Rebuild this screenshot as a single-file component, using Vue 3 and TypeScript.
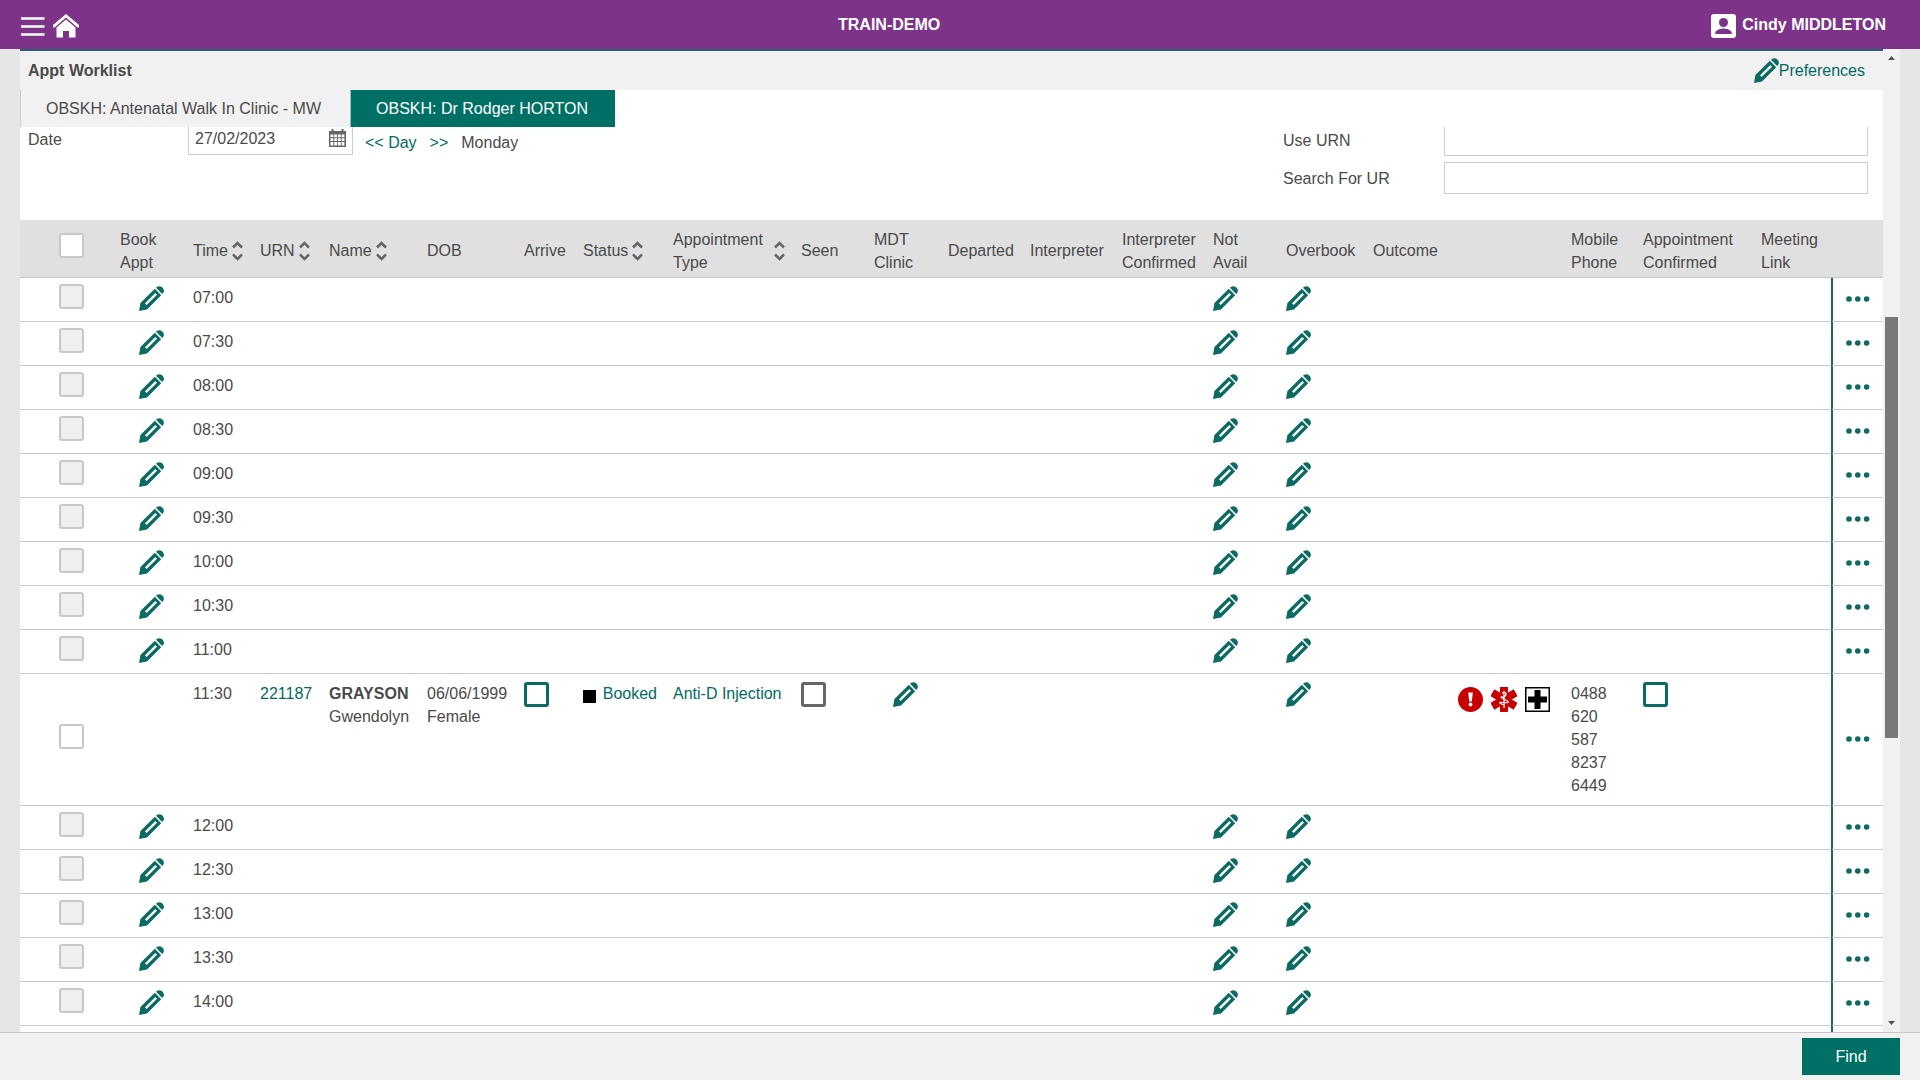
<script setup lang="ts">
import { ref } from 'vue'

interface Column {
  label: string
  width: number | null
  sortable?: boolean
}

const columns: Column[] = [
  { label: 'Book Appt', width: 73 },
  { label: 'Time', width: 67, sortable: true },
  { label: 'URN', width: 69, sortable: true },
  { label: 'Name', width: 98, sortable: true },
  { label: 'DOB', width: 97 },
  { label: 'Arrive', width: 59 },
  { label: 'Status', width: 90, sortable: true },
  { label: 'Appointment Type', width: 128, sortable: true },
  { label: 'Seen', width: 73 },
  { label: 'MDT Clinic', width: 74 },
  { label: 'Departed', width: 82 },
  { label: 'Interpreter', width: 92 },
  { label: 'Interpreter Confirmed', width: 91 },
  { label: 'Not Avail', width: 73 },
  { label: 'Overbook', width: 87 },
  { label: 'Outcome', width: null },
  { label: 'Mobile Phone', width: 72 },
  { label: 'Appointment Confirmed', width: 118 },
  { label: 'Meeting Link', width: 78 },
]

interface Patient {
  urn: string
  surname: string
  given: string
  dob: string
  sex: string
  status: string
  type: string
  phone: string
}

interface Slot {
  time: string
  patient?: Patient
}

const booked: Patient = {
  urn: '221187',
  surname: 'GRAYSON',
  given: 'Gwendolyn',
  dob: '06/06/1999',
  sex: 'Female',
  status: 'Booked',
  type: 'Anti-D Injection',
  phone: '0488 620 587 8237 6449',
}

const slots: Slot[] = [
  '07:00', '07:30', '08:00', '08:30', '09:00', '09:30', '10:00', '10:30',
  '11:00', '11:30', '12:00', '12:30', '13:00', '13:30', '14:00',
].map((time) => (time === '11:30' ? { time, patient: booked } : { time }))

const date = ref('27/02/2023')
const useUrn = ref('')
const searchUr = ref('')
</script>

<template>
  <svg width="0" height="0" class="defs" aria-hidden="true">
    <symbol id="pencil" viewBox="0 0 25 25">
      <path fill="currentColor" fill-rule="evenodd" d="M0 25 L1.400 17 L15.800 2.800 L22.200 9.200 L8 23.600 Z M6 17.300 L7.700 19 L18 8.700 L16.300 7 Z" />
      <path fill="currentColor" d="M17 1.800 L18 .9 Q20.600 -.9 23.400 1.600 Q26 4.400 24.100 7 L23.200 8 Z" />
    </symbol>
  </svg>
  <div class="page">
    <header class="topbar">
      <nav class="nav">
        <button type="button" class="plain" aria-label="Menu">
          <svg width="24" height="23" viewBox="0 0 24 23"><path d="M0 4.500h23.500M0 12.500h23.500M0 20.500h23.500" stroke="#fff" stroke-width="2.500" /></svg>
        </button>
        <a href="#" aria-label="Home" class="home">
          <svg width="26" height="24" viewBox="0 0 26 24" fill="#fff"><path d="M13 0 L26 11 V13.500 L24.500 13.500 L13 3.600 L1.500 13.500 L0 13.500 V11 Z" /><path d="M13 5.500 L22.500 13.500 V23.500 H16 V17 H10 V23.500 H3.500 V13.500 Z" /></svg>
        </a>
      </nav>
      <strong class="system">TRAIN-DEMO</strong>
      <div class="user">
        <svg width="25" height="24" viewBox="0 0 25 24"><rect width="25" height="24" rx="3" fill="#fff" /><circle cx="12.500" cy="8.500" r="4.500" fill="#7c3388" /><path d="M4 20 Q4 15 12.500 14.500 Q21 15 21 20 Z" fill="#7c3388" /></svg>
        <strong>Cindy MIDDLETON</strong>
      </div>
    </header>

    <div class="body">
      <main class="panel">
        <div class="titlebar">
          <h1>Appt Worklist</h1>
          <a href="#" class="prefs"><svg class="pencil"><use href="#pencil" /></svg>Preferences</a>
        </div>
        <div class="tabs" role="tablist">
          <button type="button" role="tab" class="tab" aria-selected="false">OBSKH: Antenatal Walk In Clinic - MW</button>
          <button type="button" role="tab" class="tab active" aria-selected="true">OBSKH: Dr Rodger HORTON</button>
        </div>
        <form class="filters" @submit.prevent>
          <div class="datefield">
            <label for="date">Date</label>
            <div class="datebox">
              <input id="date" v-model="date" type="text">
              <button type="button" class="plain" aria-label="Open calendar">
                <svg width="17" height="18" viewBox="0 0 17 18"><path d="M0 2h17v16H0z" fill="#666" /><path d="M3.500 0v4M13.500 0v4" stroke="#666" stroke-width="2" /><path d="M1.500 5.500h2.800v2.800H1.500zM5.200 5.500H8v2.800H5.200zM8.900 5.500h2.800v2.800H8.900zM12.600 5.500h2.800v2.800h-2.800zM1.500 9.200h2.800V12H1.500zM5.200 9.200H8V12H5.200zM8.900 9.200h2.800V12H8.900zM12.600 9.200h2.800V12h-2.800zM1.500 13h2.800v3.400H1.500zM5.200 13H8v3.400H5.200zM8.900 13h2.800v3.400H8.900zM12.600 13h2.800v3.400h-2.800z" fill="#fff" /></svg>
              </button>
            </div>
            <div class="daynav">
              <span><a href="#" aria-label="Previous day">&lt;&lt;</a> <a href="#">Day</a></span>
              <a href="#" aria-label="Next day">&gt;&gt;</a>
              <span>Monday</span>
            </div>
          </div>
          <div class="search">
            <div class="field first">
              <label for="useurn">Use URN</label>
              <input id="useurn" v-model="useUrn" type="text">
            </div>
            <div class="field">
              <label for="searchur">Search For UR</label>
              <input id="searchur" v-model="searchUr" type="text">
            </div>
          </div>
        </form>

        <div class="list">
          <table>
            <colgroup>
              <col style="width: 92px">
              <col v-for="c in columns" :key="c.label" :style="c.width ? { width: c.width + 'px' } : undefined">
              <col style="width: 52px">
            </colgroup>
            <thead>
              <tr>
                <th class="pick"><input type="checkbox" class="box" aria-label="Select all"></th>
                <th v-for="c in columns" :key="c.label" scope="col">
                  <span class="head">
                    <span>{{ c.label }}</span>
                    <svg v-if="c.sortable" width="11" height="20" viewBox="0 0 11 20" fill="none" stroke="#666" stroke-width="2.500"><path d="M1 6.500 L5.500 2 L10 6.500M1 13.500 L5.500 18 L10 13.500" /></svg>
                  </span>
                </th>
                <th></th>
              </tr>
            </thead>
            <tbody>
              <tr v-for="s in slots" :key="s.time">
                <td class="pick"><input type="checkbox" class="box" :disabled="!s.patient" :aria-label="'Select ' + s.time"></td>
                <td class="indent"><a v-if="!s.patient" href="#" aria-label="Book appointment"><svg class="pencil"><use href="#pencil" /></svg></a></td>
                <td>{{ s.time }}</td>
                <td><a v-if="s.patient" href="#">{{ s.patient.urn }}</a></td>
                <td><template v-if="s.patient"><strong>{{ s.patient.surname }}</strong><br>{{ s.patient.given }}</template></td>
                <td><template v-if="s.patient">{{ s.patient.dob }}<br>{{ s.patient.sex }}</template></td>
                <td><input v-if="s.patient" type="checkbox" class="box teal" aria-label="Arrive"></td>
                <td><span v-if="s.patient" class="status"><i class="swatch"></i><a href="#">{{ s.patient.status }}</a></span></td>
                <td class="nowrap"><a v-if="s.patient" href="#">{{ s.patient.type }}</a></td>
                <td><input v-if="s.patient" type="checkbox" class="box dark" aria-label="Seen"></td>
                <td class="indent"><a v-if="s.patient" href="#" aria-label="MDT clinic"><svg class="pencil"><use href="#pencil" /></svg></a></td>
                <td></td>
                <td></td>
                <td></td>
                <td><a v-if="!s.patient" href="#" aria-label="Not available"><svg class="pencil"><use href="#pencil" /></svg></a></td>
                <td><a href="#" aria-label="Overbook"><svg class="pencil"><use href="#pencil" /></svg></a></td>
                <td>
                  <div v-if="s.patient" class="alerts">
                    <svg width="25" height="25" viewBox="0 0 25 25"><circle cx="12.500" cy="12.500" r="12.500" fill="#c80000" /><path d="M10.200 5.500h4.600l-1 9h-2.600z" fill="#fff" /><circle cx="12.500" cy="17.500" r="1.900" fill="#fff" /></svg>
                    <svg width="26" height="25" viewBox="0 0 26 25"><g fill="#c80000"><rect x="9" y="0" width="8" height="25" /><rect x="9" y="-1" width="8" height="27" transform="rotate(60 13 12.500)" /><rect x="9" y="-1" width="8" height="27" transform="rotate(120 13 12.500)" /></g><path d="M13 4v17M11 6q5-1.500 4 1.500t-4 2.500 3.500 3-2 2.500 1.500 3" fill="none" stroke="#fff" stroke-width="1.200" /></svg>
                    <svg width="25" height="25" viewBox="0 0 25 25"><path d="M0 0h25v25H0z" /><path d="M1.500 1.500h22v22h-22z" fill="#fff" /><path d="M9.500 3h6v6.500H22v6h-6.500V22h-6v-6.500H3v-6h6.500z" /></svg>
                  </div>
                </td>
                <td>{{ s.patient?.phone }}</td>
                <td><input v-if="s.patient" type="checkbox" class="box teal" aria-label="Appointment confirmed"></td>
                <td></td>
                <td class="more">
                  <button type="button" class="plain" aria-label="More actions">
                    <svg width="24" height="6" viewBox="0 0 24 6" fill="#0b6b62"><circle cx="3" cy="3" r="2.800" /><circle cx="11.800" cy="3" r="2.800" /><circle cx="20.600" cy="3" r="2.800" /></svg>
                  </button>
                </td>
              </tr>
            </tbody>
          </table>
          <div class="rest"></div>
        </div>
      </main>
      <div class="scrollbar" aria-hidden="true">
        <svg width="17" height="17" viewBox="0 0 17 17"><path d="M5 11h7L8.500 7z" fill="#505050" /></svg>
        <i class="before"></i>
        <i class="thumb"></i>
        <i class="after"></i>
        <svg width="17" height="17" viewBox="0 0 17 17"><path d="M5 6h7l-3.500 4z" fill="#505050" /></svg>
      </div>
    </div>

    <footer class="actions"><button type="button" class="find">Find</button></footer>
  </div>
</template>

<style>
body {
  margin: 0;
}
</style>

<style scoped>
.page {
  display: flex;
  flex-direction: column;
  height: 100vh;
  background: #e6e6e6;
  color: #4a4a4a;
  font: 16px/23px "Liberation Sans", Arial, sans-serif;
}
.page *,
.page {
  box-sizing: border-box;
}
.defs {
  position: absolute;
}
svg {
  display: block;
  flex: none;
}
a {
  color: #006b60;
  text-decoration: none;
}
button,
input {
  margin: 0;
  color: inherit;
  font: inherit;
}
.plain {
  padding: 0;
  border: 0;
  background: none;
}
.pencil {
  width: 25px;
  height: 25px;
  color: #0b6b62;
}
.topbar {
  display: flex;
  flex: none;
  align-items: center;
  height: 49px;
  background: #7c3388;
  color: #fff;
}
.nav {
  display: flex;
  align-items: center;
  gap: 8px;
  padding-left: 21px;
  padding-top: 2px;
}
.system {
  flex: 1;
  text-align: center;
}
.user {
  display: flex;
  align-items: center;
  gap: 6px;
  padding: 0 34px 0 12px;
}
.user svg {
  margin-top: 2px;
}
.body {
  display: flex;
  flex: 1;
  min-height: 0;
  padding: 0 20px;
}
.panel {
  display: flex;
  flex: 1;
  flex-direction: column;
  min-width: 0;
  border-top: 2px solid #2a5f73;
  background: #fff;
}
.titlebar {
  display: flex;
  flex: none;
  align-items: center;
  justify-content: space-between;
  height: 39px;
  padding: 0 18px 0 8px;
  background: #f1f1f1;
}
h1 {
  margin: 0;
  font-size: 16px;
  line-height: 23px;
}
.prefs {
  display: flex;
  align-items: center;
}
.tabs {
  display: flex;
  flex: none;
  height: 37px;
}
.tab {
  padding: 0 29px 0 25px;
  border: 0;
  border-left: 1px solid #ccc;
  background: #f1f1f1;
}
.tab.active {
  padding-right: 27px;
  border-left-color: #8fc0ba;
  background: #007065;
  color: #fff;
}
.filters {
  display: flex;
  flex: none;
  justify-content: space-between;
  height: 93px;
}
.datefield {
  display: flex;
  align-items: flex-start;
  padding-left: 8px;
}
.datefield label {
  width: 160px;
  padding-top: 1px;
}
.datebox {
  display: flex;
  align-items: flex-start;
  width: 165px;
  height: 28px;
  padding: 0 6px;
  border: 1px solid #ccc;
  border-top: 0;
}
.datebox input {
  flex: 1;
  min-width: 0;
  height: 23px;
  padding: 0;
  border: 0;
  outline: 0;
}
.datebox button {
  padding-top: 2px;
}
.daynav {
  display: flex;
  gap: 13px;
  padding: 4px 0 0 12px;
}
.search {
  display: flex;
  flex-direction: column;
  gap: 6px;
  width: 600px;
  padding-right: 15px;
}
.field {
  display: flex;
  align-items: center;
}
.field label {
  width: 161px;
}
.field input {
  flex: 1;
  min-width: 0;
  height: 32px;
  padding: 0 8px;
  border: 1px solid #ccc;
  background: #fff;
}
.first {
  align-items: flex-start;
}
.first label {
  padding-top: 2px;
}
.first input {
  height: 29px;
  border-top: 0;
}
.list {
  display: flex;
  flex: 1;
  flex-direction: column;
  min-height: 0;
  overflow: hidden;
}
table {
  flex: none;
  width: 100%;
  border-collapse: separate;
  border-spacing: 0;
  table-layout: fixed;
}
th {
  height: 58px;
  padding: 4px 8px 0;
  border-bottom: 1px solid #c8c8c8;
  background: #e0e0e0;
  font-weight: 400;
  text-align: left;
  vertical-align: middle;
}
.head {
  display: flex;
  align-items: center;
  gap: 4px;
}
td {
  height: 44px;
  padding: 8px;
  border-bottom: 1px solid #c8c8c8;
  vertical-align: top;
}
.nowrap {
  white-space: nowrap;
}
td.indent {
  padding-left: 27px;
}
th.pick,
td.pick {
  padding: 0 0 7px 39px;
  vertical-align: middle;
}
td.more {
  padding: 0 0 2px 13px;
  border-left: 2px solid #1c6660;
  vertical-align: middle;
}
.more .plain {
  display: block;
}
.box {
  display: block;
  width: 25px;
  height: 25px;
  border: 2px solid #c8c8c8;
  border-radius: 3px;
  background: #fff;
  appearance: none;
}
.box:disabled {
  background: #efefef;
}
.box.teal {
  border: 3px solid #0b6b62;
}
.box.dark {
  border: 3px solid #666;
}
.status {
  display: flex;
  align-items: center;
  gap: 7px;
}
.swatch {
  width: 13px;
  height: 13px;
  margin-top: 6px;
  background: #000;
}
.alerts {
  display: flex;
  justify-content: flex-end;
  gap: 8px;
  padding: 5px 5px 0 0;
}
.rest {
  flex: 1;
  margin-right: 50px;
  border-right: 2px solid #1c6660;
}
.scrollbar {
  display: flex;
  flex-direction: column;
  width: 17px;
  background: #f1f1f1;
}
.before {
  flex: 251;
}
.thumb {
  flex: 421;
  margin: 0 2px;
  background: #787878;
}
.after {
  flex: 277;
}
.actions {
  display: flex;
  flex: none;
  justify-content: flex-end;
  height: 48px;
  padding: 5px 20px;
  border-top: 1px solid #c8c8c8;
  background: #f1f1f1;
}
.find {
  width: 98px;
  height: 37px;
  border: 0;
  background: #007065;
  color: #fff;
}
</style>
